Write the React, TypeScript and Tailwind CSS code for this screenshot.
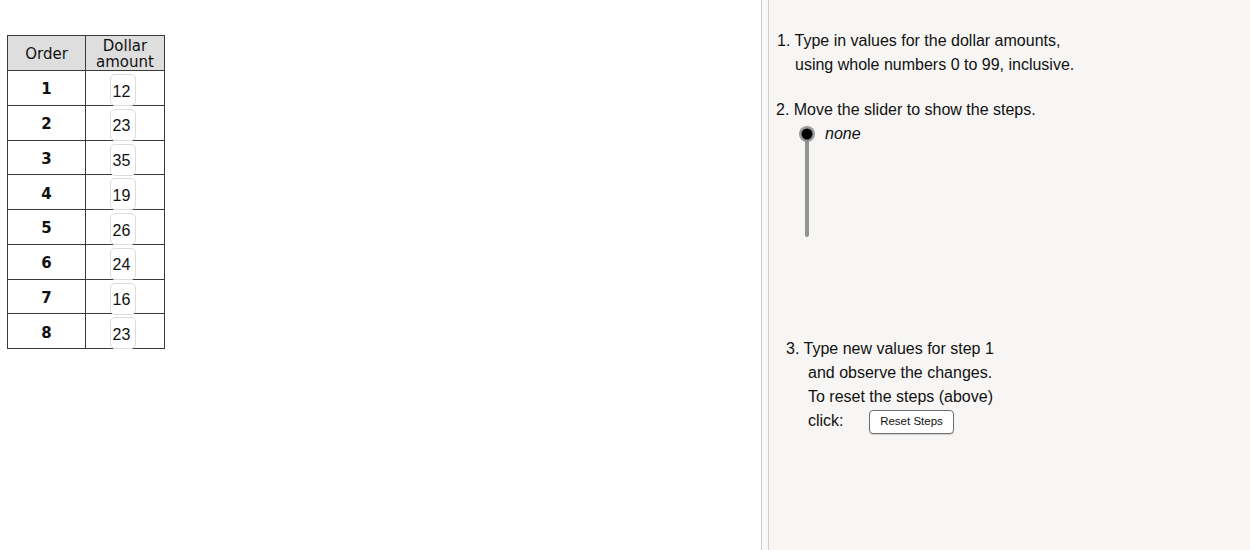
const rows: [number, number][] = [
  [1, 12],
  [2, 23],
  [3, 35],
  [4, 19],
  [5, 26],
  [6, 24],
  [7, 16],
  [8, 23],
]

function AmountTable() {
  return (
    <div className="ml-[7px] mt-[35px] w-[158px] border border-[#3a3a3a] font-['DejaVu_Sans',sans-serif] text-[15px] text-[#111]">
      <div className="grid h-[34px] grid-cols-[78px_1fr] bg-[#dedede]">
        <div className="flex items-center justify-center border-r border-[#3a3a3a] pt-[2px]">Order</div>
        <div className="flex flex-col items-center justify-center pt-[2px] leading-[16px]">
          <span>Dollar</span>
          <span>amount</span>
        </div>
      </div>
      {rows.map(([order, amount]) => (
        <div key={order} className="grid h-[34.75px] grid-cols-[78px_1fr] border-t border-[#3a3a3a]">
          <div className="flex items-center justify-center border-r border-[#3a3a3a] pt-[2px] font-bold">{order}</div>
          <div className="flex items-start justify-center pt-[3px]">
            <div className="-ml-[5px] flex h-[32px] w-[26px] items-center rounded-[5px] border border-[#dcdcdc] bg-white pl-[2px] pt-[3px] font-['Liberation_Sans',Arial,sans-serif] text-[16px]">
              {amount}
            </div>
          </div>
        </div>
      ))}
    </div>
  )
}

function Slider() {
  return (
    <svg width="20" height="116" viewBox="0 0 20 116" className="block">
      <line x1="10" y1="8" x2="10" y2="110" stroke="#949494" strokeWidth="4" strokeLinecap="round" />
      <circle cx="10" cy="9" r="8" fill="#8a8a8a" opacity="0.85" />
      <circle cx="10" cy="9" r="5.5" fill="#000" />
    </svg>
  )
}

export default function App() {
  return (
    <div className="flex h-[550px] w-[1250px] overflow-hidden bg-white">
      <div className="w-[761px] shrink-0">
        <AmountTable />
      </div>
      <div className="w-[8px] shrink-0 border-x border-[#cfcfcf] bg-[#f7f8f8]" />
      <div className="flex-1 bg-[#f7f6f5] font-['Liberation_Sans',Arial,sans-serif] text-[16px] leading-[24px] text-[#111]">
        <div className="pl-[8px] pt-[29px]">
          <p>1. Type in values for the dollar amounts,</p>
          <p className="pl-[18px]">using whole numbers 0 to 99, inclusive.</p>
        </div>
        <div className="mt-[21px] pl-[7px]">
          <p>2. Move the slider to show the steps.</p>
          <div className="mt-[3px] flex items-start pl-[21px]">
            <Slider />
            <span className="-mt-[3px] ml-[8px] italic">none</span>
          </div>
        </div>
        <div className="mt-[96px] pl-[17px]">
          <p>3. Type new values for step 1</p>
          <div className="pl-[22px]">
            <p>and observe the changes.</p>
            <p>To reset the steps (above)</p>
            <div className="flex items-start">
              <span className="w-[61px]">click:</span>
              <button className="mt-[1px] h-[24px] w-[85px] rounded-[4px] border border-[#6f6f6f] bg-white text-[11.5px] leading-none text-[#111] shadow-[0_1px_1px_rgba(0,0,0,0.15)]">
                Reset Steps
              </button>
            </div>
          </div>
        </div>
      </div>
    </div>
  )
}
